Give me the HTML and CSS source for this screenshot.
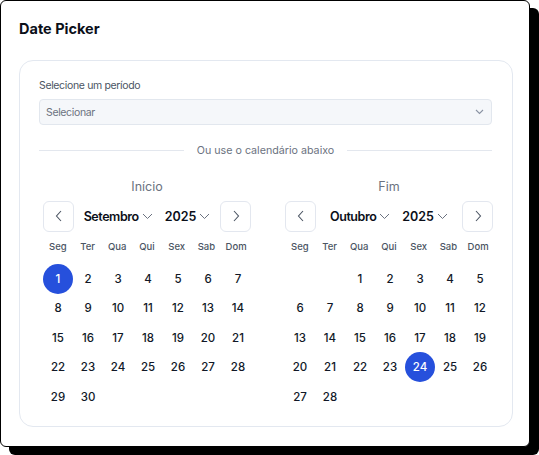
FILE: index.html
```html
<!DOCTYPE html>
<html lang="pt-BR">
<head>
<meta charset="utf-8">
<title>Date Picker</title>
<link rel="stylesheet" href="styles.css">
</head>
<body>
<div class="frame">
<div class="card">
  <h1 class="title">Date Picker</h1>
  <div class="panel">
    <label class="label">Selecione um período</label>
    <div class="select">
      <span>Selecionar</span>
      <svg class="sel-chev" width="9" height="6" viewBox="0 0 9 6"><path d="M1 1l3.5 3.5L8 1" fill="none" stroke="#8a93a3" stroke-width="1.1"/></svg>
    </div>
    <div class="divider"><span class="line"></span><span class="dtext">Ou use o calendário abaixo</span><span class="line"></span></div>
    <div class="cals">
      <div class="cal">
        <div class="cal-title">Início</div>
        <div class="nav">
          <button class="navbtn"><svg width="8" height="12" viewBox="0 0 8 12"><path d="M6 1L1.5 6 6 11" fill="none" stroke="#4b5563" stroke-width="1.1"/></svg></button>
          <div class="ym">
            <span class="sel"><span class="mon">Setembro</span><svg class="chev" width="11" height="7" viewBox="0 0 11 7"><path d="M1 1l4.5 4.5L10 1" fill="none" stroke="#6b7280" stroke-width="1"/></svg></span>
            <span class="sel">2025<svg class="chev" width="11" height="7" viewBox="0 0 11 7"><path d="M1 1l4.5 4.5L10 1" fill="none" stroke="#6b7280" stroke-width="1"/></svg></span>
          </div>
          <button class="navbtn"><svg width="8" height="12" viewBox="0 0 8 12"><path d="M2 1l4.5 5L2 11" fill="none" stroke="#4b5563" stroke-width="1.1"/></svg></button>
        </div>
        <div class="grid wk"><span>Seg</span><span>Ter</span><span>Qua</span><span>Qui</span><span>Sex</span><span>Sab</span><span>Dom</span></div>
        <div class="grid days">
          <span><b class="on">1</b></span><span><b>2</b></span><span><b>3</b></span><span><b>4</b></span><span><b>5</b></span><span><b>6</b></span><span><b>7</b></span>
          <span><b>8</b></span><span><b>9</b></span><span><b>10</b></span><span><b>11</b></span><span><b>12</b></span><span><b>13</b></span><span><b>14</b></span>
          <span><b>15</b></span><span><b>16</b></span><span><b>17</b></span><span><b>18</b></span><span><b>19</b></span><span><b>20</b></span><span><b>21</b></span>
          <span><b>22</b></span><span><b>23</b></span><span><b>24</b></span><span><b>25</b></span><span><b>26</b></span><span><b>27</b></span><span><b>28</b></span>
          <span><b>29</b></span><span><b>30</b></span>
        </div>
      </div>
      <div class="cal">
        <div class="cal-title">Fim</div>
        <div class="nav">
          <button class="navbtn"><svg width="8" height="12" viewBox="0 0 8 12"><path d="M6 1L1.5 6 6 11" fill="none" stroke="#4b5563" stroke-width="1.1"/></svg></button>
          <div class="ym">
            <span class="sel"><span class="mon">Outubro</span><svg class="chev" width="11" height="7" viewBox="0 0 11 7"><path d="M1 1l4.5 4.5L10 1" fill="none" stroke="#6b7280" stroke-width="1"/></svg></span>
            <span class="sel">2025<svg class="chev" width="11" height="7" viewBox="0 0 11 7"><path d="M1 1l4.5 4.5L10 1" fill="none" stroke="#6b7280" stroke-width="1"/></svg></span>
          </div>
          <button class="navbtn"><svg width="8" height="12" viewBox="0 0 8 12"><path d="M2 1l4.5 5L2 11" fill="none" stroke="#4b5563" stroke-width="1.1"/></svg></button>
        </div>
        <div class="grid wk"><span>Seg</span><span>Ter</span><span>Qua</span><span>Qui</span><span>Sex</span><span>Sab</span><span>Dom</span></div>
        <div class="grid days">
          <span></span><span></span><span><b>1</b></span><span><b>2</b></span><span><b>3</b></span><span><b>4</b></span><span><b>5</b></span>
          <span><b>6</b></span><span><b>7</b></span><span><b>8</b></span><span><b>9</b></span><span><b>10</b></span><span><b>11</b></span><span><b>12</b></span>
          <span><b>13</b></span><span><b>14</b></span><span><b>15</b></span><span><b>16</b></span><span><b>17</b></span><span><b>18</b></span><span><b>19</b></span>
          <span><b>20</b></span><span><b>21</b></span><span><b>22</b></span><span><b>23</b></span><span><b class="on">24</b></span><span><b>25</b></span><span><b>26</b></span>
          <span><b>27</b></span><span><b>28</b></span>
        </div>
      </div>
    </div>
  </div>
</div>
</div>
</body>
</html>
```

FILE: styles.css
```css
* { box-sizing: border-box; }
html, body { margin: 0; padding: 0; background: #fff; }
body { font-family: Inter, "Noto Sans", sans-serif; color: #111827; }

.frame {
  width: 539px;
  height: 455px;
  overflow: hidden;
}
.card {
  width: 530px;
  height: 447px;
  background: #fff;
  border: 1px solid #000;
  border-radius: 6px;
  box-shadow: 9px 8px 0 0 #000;
  padding: 18px 16px 0 18px;
}
.title {
  margin: 0;
  font-size: 14.5px;
  line-height: 20px;
  font-weight: 700;
  color: #0b0f19;
}
.panel {
  margin-top: 21px;
  width: 494px;
  border: 1px solid #e3e8f0;
  border-radius: 14px;
  padding: 17px 20px 14px 19px;
}
.label {
  display: block;
  font-size: 10.5px;
  letter-spacing: -0.35px;
  line-height: 16px;
  color: #4b5563;
}
.select {
  margin-top: 5px;
  height: 26px;
  background: #f5f7fa;
  border: 1px solid #e2e7ee;
  border-radius: 4px;
  display: flex;
  align-items: center;
  justify-content: space-between;
  padding: 0 7px 0 6px;
  font-size: 10.5px;
  letter-spacing: -0.35px;
  color: #6b7280;
}
.divider {
  margin-top: 17px;
  height: 16px;
  display: flex;
  align-items: center;
  gap: 13px;
}
.line { flex: 1; height: 1px; background: #e3e7ee; }
.dtext { font-size: 10.7px; color: #6b7280; }

.cals {
  margin-top: 20px;
  margin-left: 4px;
  display: flex;
  gap: 34px;
}
.cal { width: 208px; }
.cal-title {
  text-align: center;
  font-size: 12.5px;
  line-height: 18px;
  color: #6b7280;
}
.nav {
  margin-top: 5px;
  height: 30px;
  display: flex;
  align-items: center;
  justify-content: space-between;
}
.navbtn {
  width: 31px;
  height: 31px;
  border: 1px solid #e3e7ef;
  border-radius: 6px;
  background: #fff;
  display: flex;
  align-items: center;
  justify-content: center;
  padding: 0;
}
.ym { display: flex; gap: 12px; align-items: center; }
.sel {
  display: flex;
  align-items: center;
  gap: 3px;
  font-size: 12.5px;
  font-weight: 600;
  color: #0b0f19;
}
.mon { letter-spacing: -0.45px; }
.chev { margin-top: 1px; }
.grid {
  display: grid;
  grid-template-columns: repeat(7, 1fr);
  text-align: center;
}
.wk {
  margin-top: 9px;
  font-size: 9.5px;
  line-height: 14px;
  font-weight: 500;
  color: #4b5563;
}
.days {
  margin-top: 10px;
  grid-auto-rows: 29.5px;
  font-size: 11.5px;
  font-weight: 500;
  color: #111827;
}
.days span { display: flex; align-items: center; justify-content: center; }
.days b {
  font-weight: 500;
  width: 30px;
  height: 30px;
  border-radius: 50%;
  display: flex;
  align-items: center;
  justify-content: center;
}
.days b.on { background: #2650dc; color: #fff; }
```
